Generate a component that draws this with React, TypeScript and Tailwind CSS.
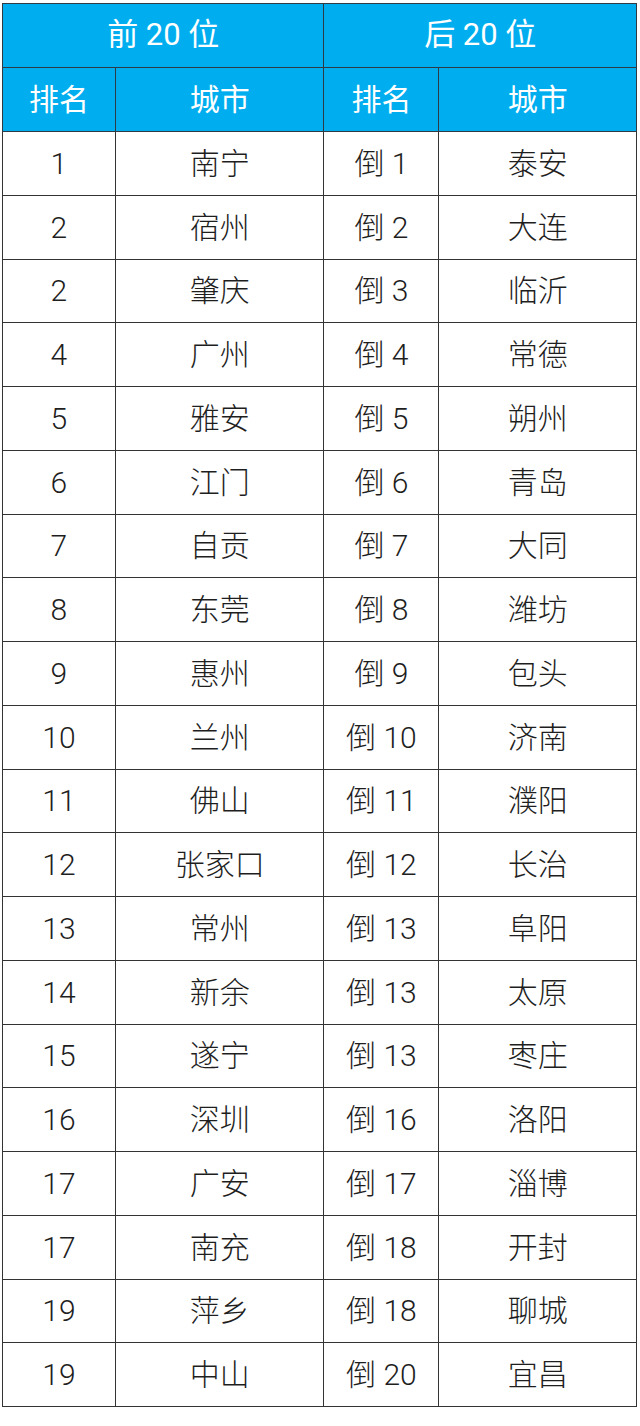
import React from "react";

const rows: [string, string, string, string][] = [
  ["1", "南宁", "倒 1", "泰安"],
  ["2", "宿州", "倒 2", "大连"],
  ["2", "肇庆", "倒 3", "临沂"],
  ["4", "广州", "倒 4", "常德"],
  ["5", "雅安", "倒 5", "朔州"],
  ["6", "江门", "倒 6", "青岛"],
  ["7", "自贡", "倒 7", "大同"],
  ["8", "东莞", "倒 8", "潍坊"],
  ["9", "惠州", "倒 9", "包头"],
  ["10", "兰州", "倒 10", "济南"],
  ["11", "佛山", "倒 11", "濮阳"],
  ["12", "张家口", "倒 12", "长治"],
  ["13", "常州", "倒 13", "阜阳"],
  ["14", "新余", "倒 13", "太原"],
  ["15", "遂宁", "倒 13", "枣庄"],
  ["16", "深圳", "倒 16", "洛阳"],
  ["17", "广安", "倒 17", "淄博"],
  ["17", "南充", "倒 18", "开封"],
  ["19", "萍乡", "倒 18", "聊城"],
  ["19", "中山", "倒 20", "宜昌"],
];

const font = { fontFamily: 'Roboto, "Noto Sans CJK SC", sans-serif' };

export default function App() {
  return (
    <div className="w-[640px] h-[1426px] bg-white pt-[3px] pl-[2px]">
      <table className="border-collapse w-[635px] text-[#1e1e1e]" style={font}>
        <colgroup>
          <col className="w-[113px]" />
          <col className="w-[209px]" />
          <col className="w-[115px]" />
          <col className="w-[198px]" />
        </colgroup>
        <thead>
          <tr className="h-[64px] bg-[#00aeef] text-white">
            <th colSpan={2} className="border border-[#2f3a44] text-[31px] font-normal">
              前 20 位
            </th>
            <th colSpan={2} className="border border-[#2f3a44] text-[31px] font-normal">
              后 20 位
            </th>
          </tr>
          <tr className="h-[64px] bg-[#00aeef] text-white">
            <th className="border border-[#2f3a44] text-[30px] font-normal">排名</th>
            <th className="border border-[#2f3a44] text-[30px] font-normal">城市</th>
            <th className="border border-[#2f3a44] text-[30px] font-normal">排名</th>
            <th className="border border-[#2f3a44] text-[30px] font-normal">城市</th>
          </tr>
        </thead>
        <tbody>
          {rows.map((r, i) => (
            <tr key={i} className="h-[63.75px]">
              {r.map((c, j) => (
                <td
                  key={j}
                  className="border border-[#333333] text-center text-[30px] font-light p-0"
                >
                  {c}
                </td>
              ))}
            </tr>
          ))}
        </tbody>
      </table>
    </div>
  );
}
